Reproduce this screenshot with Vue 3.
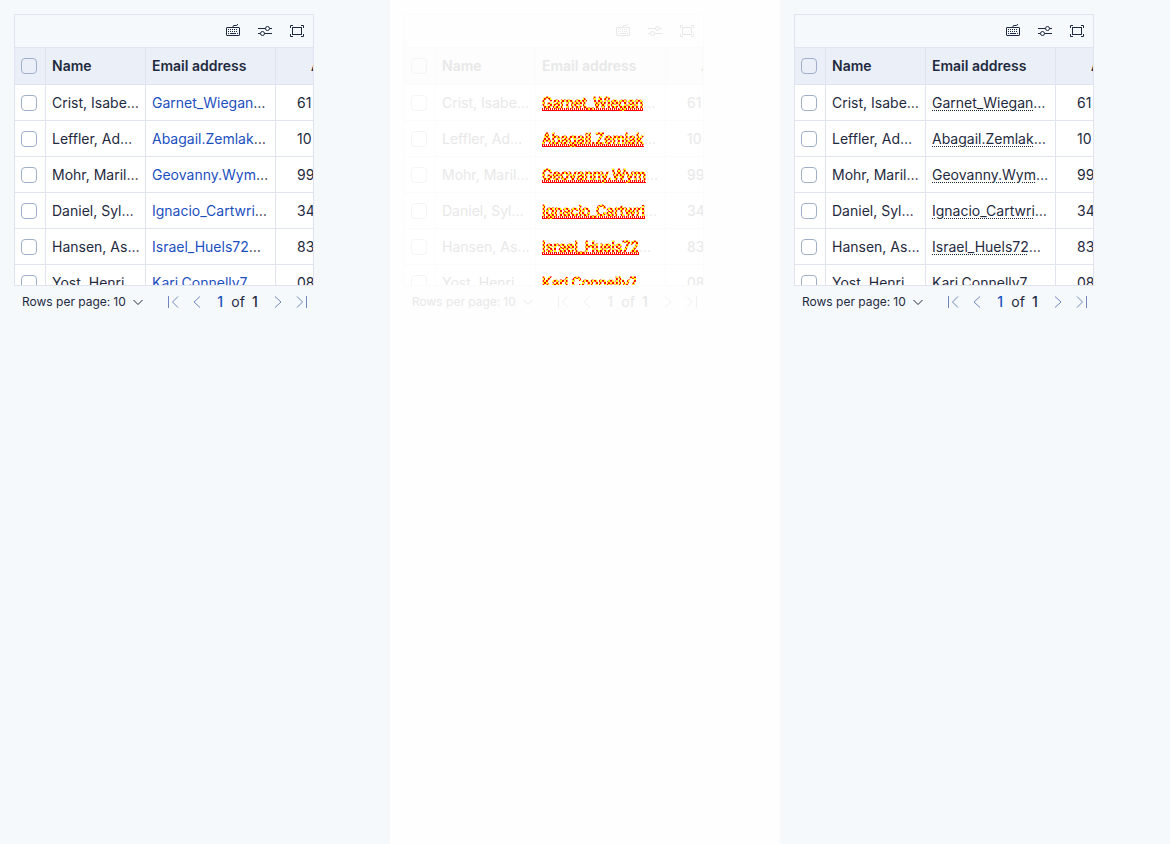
<script setup>
const panels = ['before', 'diff', 'after']
const rows = [
  ['Crist, Isabe…', 'Garnet_Wiegan', '61'],
  ['Leffler, Ad…', 'Abagail.Zemlak', '10'],
  ['Mohr, Maril…', 'Geovanny.Wym', '99'],
  ['Daniel, Syl…', 'Ignacio_Cartwri', '34'],
  ['Hansen, As…', 'Israel_Huels72', '83'],
  ['Yost, Henri…', 'Kari.Connelly7', '08'],
]
</script>

<template>
  <main class="page">
    <section v-for="p in panels" :key="p" class="panel" :class="p">
      <div class="grid">
        <div class="toolbar">
          <button type="button" aria-label="Keyboard shortcuts">
            <svg width="14" height="14" viewBox="0 0 14 14">
              <rect x=".5" y="3.5" width="13" height="8" rx=".5" />
              <path d="M7 3V2.5Q7 1.500 8 1.500H10.500Q11.500 1.500 11.500 0" />
              <path d="M2 5.500H12M2 7.500H12" stroke-dasharray="1 1" />
              <path d="M2 9.500H3M4 9.500H10M11 9.500H12" />
            </svg>
          </button>
          <button type="button" aria-label="Settings">
            <svg width="14" height="14" viewBox="0 0 14 14">
              <path d="M0 4.500H7.500M11.500 4.500H14M0 9.500H2.500M6.500 9.500H14" />
              <circle cx="9.500" cy="4.500" r="2" />
              <circle cx="4.500" cy="9.500" r="2" />
            </svg>
          </button>
          <button type="button" aria-label="Full screen">
            <svg width="14" height="14" viewBox="0 0 14 14">
              <rect x="2.500" y="3.500" width="9" height="7" />
              <path d="M.5 4V1.500H3M11 1.500H13.500V4M13.500 10V12.500H11M3 12.500H.5V10" />
            </svg>
          </button>
        </div>
        <div class="scroller">
          <table>
            <colgroup><col class="c-check" /><col class="c-name" /><col class="c-email" /><col class="c-num" /></colgroup>
            <thead>
              <tr>
                <th><input type="checkbox" aria-label="Select all rows" /></th>
                <th>Name</th>
                <th>Email address</th>
                <th class="num-head">A</th>
              </tr>
            </thead>
            <tbody>
              <tr v-for="r in rows" :key="r[0]">
                <td><input type="checkbox" :aria-label="'Select ' + r[0]" /></td>
                <td>{{ r[0] }}</td>
                <td><a href="#">{{ r[1] }}</a>…</td>
                <td class="num">{{ r[2] }}</td>
              </tr>
            </tbody>
          </table>
        </div>
      </div>
      <div class="pager">
        <label :for="p + '-size'">Rows per page:</label>
        <select :id="p + '-size'"><option>10</option></select>
        <svg class="caret" width="10" height="10" viewBox="0 0 10 10"><path d="M.5 3L5 7.500L9.500 3" /></svg>
        <nav aria-label="Pages">
          <button type="button" aria-label="First page">
            <svg width="12" height="12" viewBox="0 0 12 12"><path d="M1.500 0V12M11 .5L5.500 6L11 11.500" /></svg>
          </button>
          <button type="button" aria-label="Previous page">
            <svg width="12" height="12" viewBox="0 0 12 12"><path d="M9 .5L3 6L9 11.500" /></svg>
          </button>
          <span class="pages"><input type="text" value="1" aria-label="Page" /><span>of</span><b>1</b></span>
          <button type="button" aria-label="Next page">
            <svg width="12" height="12" viewBox="0 0 12 12"><path d="M3 .5L9 6L3 11.500" /></svg>
          </button>
          <button type="button" aria-label="Last page">
            <svg width="12" height="12" viewBox="0 0 12 12"><path d="M10.500 0V12M1 .5L6.500 6L1 11.500" /></svg>
          </button>
        </nav>
      </div>
    </section>
  </main>
</template>

<style>
body { margin: 0; }
</style>

<style scoped>
* { box-sizing: border-box; }
.page {
  display: grid;
  grid-template-columns: repeat(3, 1fr);
  min-height: 100vh;
  font: 14px/20px Inter, sans-serif;
}
.panel {
  --bg: #f5f9fc;
  --head: #ebeff8;
  --row: #fff;
  --line: #e0e4f0;
  --text: #1f2a40;
  --link: #1c4fc0;
  --box: #a0b0cc;
  --nav: #7288bc;
  min-width: 0;
  padding: 14px 76px 14px 14px;
  background: var(--bg);
  color: var(--text);
}
.after { --link: var(--text); }
.diff {
  --bg: #fefefe;
  --head: #fdfdfd;
  --line: #fbfbfb;
  --text: #e8e8e8;
  --box: #f5f5f5;
  --nav: #f1f1f1;
}
button {
  display: flex;
  align-items: center;
  justify-content: center;
  padding: 0;
  border: 0;
  background: none;
  color: inherit;
}
svg { fill: none; stroke: currentColor; stroke-width: 1; }
.grid { border: 1px solid var(--line); }
.toolbar {
  display: flex;
  justify-content: flex-end;
  height: 33px;
  border-bottom: 1px solid var(--line);
}
.toolbar button { width: 32px; height: 32px; }
.scroller { height: 237px; overflow: hidden; background: var(--row); }
table { table-layout: fixed; width: 361px; border-collapse: separate; border-spacing: 0; }
.c-check { width: 31px; }
.c-name { width: 100px; }
.c-email { width: 130px; }
.c-num { width: 100px; }
th, td {
  height: 36px;
  padding: 0 6px;
  border-right: 1px solid var(--line);
  border-bottom: 1px solid var(--line);
  text-align: left;
  white-space: nowrap;
}
th { height: 37px; background: var(--head); font-weight: 600; }
.num { padding-left: 21px; }
.num-head { padding-left: 35px; }
input[type='checkbox'] {
  appearance: none;
  display: block;
  width: 16px;
  height: 16px;
  margin: 0;
  border: 1px solid var(--box);
  border-radius: 4px;
  background: transparent;
}
a { color: var(--link); text-decoration: none; }
.after a { text-decoration: underline dotted 1px; text-underline-offset: 2px; }
/* changed pixels: red and yellow speckle inside the letters, red comb below them */
.diff a {
  color: transparent;
  -webkit-text-stroke: 1px transparent;
  background-image:
    conic-gradient(#f00 25%, #ff0 0 50%, #f00 0 75%, #ff0 0),
    linear-gradient(#f00, #f00),
    repeating-linear-gradient(90deg, #f00 0 1px, transparent 1px 2px);
  background-size: 4px 4px, 100% 1px, 100% 3px;
  background-position: 0 0, 0 100%, 0 100%;
  background-repeat: repeat, no-repeat, no-repeat;
  background-clip: text, border-box, border-box;
}
.pager {
  display: flex;
  align-items: center;
  height: 32px;
  padding-left: 8px;
  font-size: 12px;
  line-height: 16px;
}
select {
  appearance: none;
  margin: 0 0 0 3px;
  padding: 0;
  border: 0;
  background: none;
  color: inherit;
  font: inherit;
}
.caret { margin-left: 7px; }
nav { display: flex; margin-left: auto; color: var(--nav); }
nav button { width: 24px; height: 24px; }
.pages {
  display: flex;
  align-items: center;
  justify-content: center;
  gap: 7px;
  width: 57px;
  color: var(--text);
  font-size: 14px;
}
.pages b { font-weight: 500; }
.pages input {
  width: 7px;
  padding: 0;
  border: 0;
  background: none;
  color: var(--page, #1c55c0);
  font: 500 14px/20px Inter, sans-serif;
}
.diff .pages input { --page: #ececec; }
</style>
